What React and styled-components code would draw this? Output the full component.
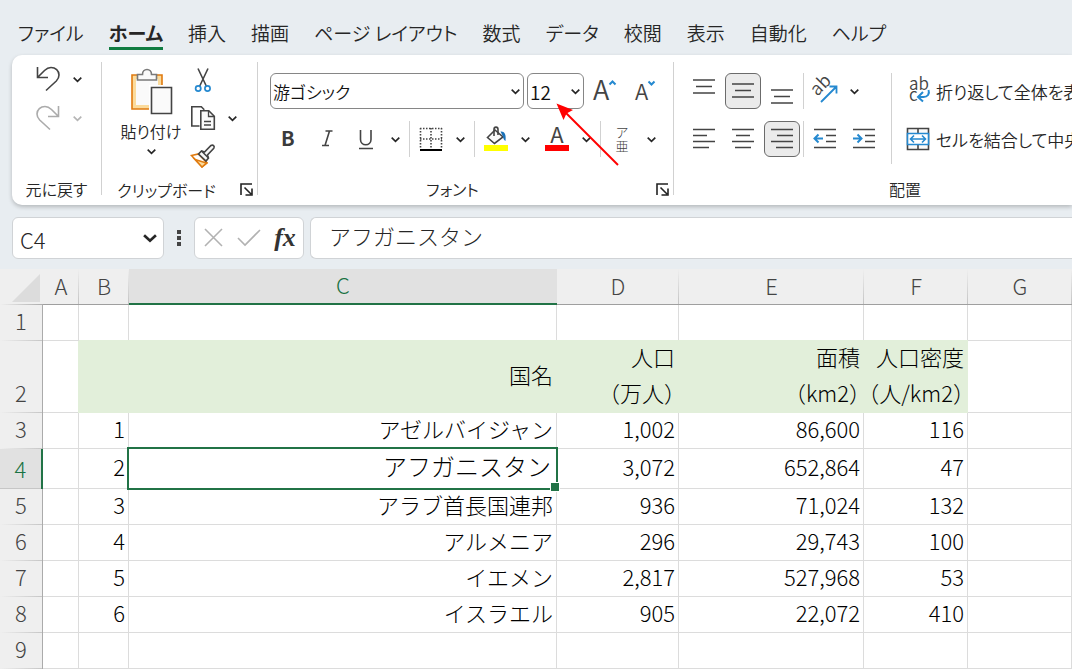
import React from "react";
import styled, { createGlobalStyle } from "styled-components";

const GlobalStyle = createGlobalStyle`
  * {
    box-sizing: border-box;
  }
  body {
    margin: 0;
    background: #e8edf1;
    color: #262626;
    font-family: "Noto Sans CJK JP", sans-serif;
    overflow-x: hidden;
  }
  button, input, select {
    font: inherit;
    color: inherit;
  }
`;

const Page = styled.div`
  position: relative;
  overflow: hidden;
`;

/* tabs */

const Tabs = styled.nav`
  display: flex;
  gap: 25px;
  height: 55px;
  padding: 17px 18px 0;
  white-space: nowrap;
`;

const Tab = styled.a`
  height: 33px;
  font-size: 19px;
  line-height: 32px;
  font-weight: ${(props) => (props.$active ? 700 : 350)};
  font-feature-settings: "palt";
  color: #262626;
  text-decoration: none;
  border-bottom: 3px solid ${(props) => (props.$active ? "#107c41" : "transparent")};
`;

/* ribbon */

const Ribbon = styled.section`
  display: flex;
  height: 150px;
  margin-left: 12px;
  background: #fff;
  border-radius: 10px 0 0 10px;
  box-shadow: 0 2px 4px rgba(0, 0, 0, 0.22);
  font-weight: 350;
  white-space: nowrap;
`;

const Group = styled.div`
  display: flex;
  flex: none;
  flex-direction: column;
  width: ${(props) => props.$width}px;
`;

const GroupBody = styled.div`
  display: flex;
  flex: 1;
  padding: ${(props) => props.$pad || "0"};
`;

const GroupFooter = styled.div`
  display: flex;
  align-items: center;
  height: 32px;
  font-size: 16px;
  line-height: 24px;
  font-feature-settings: "palt";
  text-align: center;
`;

const GroupLabel = styled.span`
  flex: 1;
`;

const Divider = styled.div`
  flex: none;
  width: 1px;
  margin: ${(props) => props.$margin || "0"};
  background: #d1d1d1;
`;

const Rows = styled.div`
  display: flex;
  flex-direction: column;
  gap: 12px;
`;

const Row = styled.div`
  display: flex;
  gap: ${(props) => props.$gap || 3}px;
  height: 36px;
`;

const IconButton = styled.button`
  display: flex;
  flex: none;
  align-items: center;
  justify-content: center;
  width: 36px;
  height: 36px;
  padding: 0;
  border: 1px solid ${(props) => (props.$on ? "#6b6b6b" : "transparent")};
  border-radius: 6px;
  background: ${(props) => (props.$on ? "#ebebeb" : "transparent")};

  svg {
    overflow: visible;
  }
`;

const MenuButton = styled.button`
  display: flex;
  flex: none;
  align-items: center;
  justify-content: center;
  width: 16px;
  padding: 0;
  border: 0;
  background: none;
  color: ${(props) => (props.$muted ? "#b5b5b5" : "#262626")};
`;

const Split = styled.div`
  display: flex;
  gap: 3px;
  padding-right: 3px;
`;

const UndoColumn = styled.div`
  display: flex;
  flex-direction: column;
  gap: 3px;
`;

const ClipColumn = styled.div`
  display: flex;
  flex-direction: column;
  gap: 2px;
`;

const PasteButton = styled.button`
  display: flex;
  flex-direction: column;
  align-items: center;
  width: 68px;
  padding: 5px 0 0;
  border: 0;
  background: none;
  font-size: 16px;
  line-height: 32px;
  font-feature-settings: "palt";
`;

const Picker = styled.div`
  display: grid;
  width: ${(props) => props.$width}px;
  align-items: center;

  select,
  svg {
    grid-area: 1 / 1;
  }
  select {
    height: 36px;
    padding: 0 20px 0 2px;
    appearance: none;
    border: 1px solid #868686;
    border-radius: 6px;
    background: #fff;
    color: #111;
    font-size: ${(props) => props.$size}px;
    font-feature-settings: "palt";
  }
  svg {
    justify-self: end;
    margin-right: 4px;
    pointer-events: none;
  }
`;

const TextButton = styled.button`
  display: flex;
  align-items: center;
  gap: 5px;
  height: 36px;
  padding: 0;
  border: 0;
  background: none;
  font-size: 17px;
  font-feature-settings: "palt";

  svg {
    overflow: visible;
  }
`;

const Launcher = styled.button`
  display: flex;
  justify-content: flex-end;
  width: 26px;
  padding: 0 4px 0 0;
  border: 0;
  background: none;
`;

/* formula bar */

const FormulaBar = styled.div`
  display: flex;
  height: 64px;
  padding: 12px 0 10px 12px;
`;

const Field = styled.div`
  display: flex;
  align-items: center;
  background: #fff;
  border: 1px solid #d0d3d6;
  border-radius: 6px;
`;

const NameBox = styled(Field)`
  width: 152px;
  padding-right: 5px;

  input {
    flex: 1;
    min-width: 0;
    padding: 2px 0 0 7px;
    border: 0;
    background: none;
    outline: none;
    font-size: 22px;
    font-weight: 300;
    line-height: 32px;
  }
`;

const Grip = styled.div`
  display: flex;
  flex-direction: column;
  align-items: center;
  justify-content: center;
  gap: 2px;
  width: 30px;

  i {
    width: 4px;
    height: 4px;
    background: #444;
  }
`;

const EntryButtons = styled(Field)`
  width: 110px;
  justify-content: space-around;
  margin-right: 6px;
`;

const FormulaInput = styled.input`
  && {
    flex: 1;
    min-width: 0;
    padding: 0 0 6px 18px;
    background: #fff;
    border: 1px solid #d0d3d6;
    border-right: 0;
    border-radius: 6px 0 0 6px;
    font-size: 22px;
    font-weight: 300;
  }
`;

const FxButton = styled(IconButton)`
  && {
    color: #333;
    font: italic bold 26px "Liberation Serif", serif;
  }
`;

/* sheet */

const Sheet = styled.table`
  width: 100%;
  table-layout: fixed;
  border-collapse: separate;
  border-spacing: 0;
  background: #fff;
  font-size: 22px;
  font-weight: 300;
  line-height: 30px;
  color: #000;
`;

const Corner = styled.td`
  height: 36px;
  padding: 0 3px 3px 0;
  background: linear-gradient(to right, #efefef, #ababab) bottom / 100% 1px no-repeat #efefef;
  vertical-align: bottom;

  svg {
    display: block;
    margin-left: auto;
  }
`;

const ColHead = styled.th`
  height: 36px;
  padding: 0 0 4px;
  font-weight: 300;
  color: ${(props) => (props.$active ? "#1a7343" : "#444")};
  background: ${(props) =>
    props.$active
      ? "#e1e1e1"
      : "linear-gradient(#efefef, #c4c4c4) right / 1px 100% no-repeat #efefef"};
  border-bottom: ${(props) => (props.$active ? "2px solid #217346" : "1px solid #9f9f9f")};
`;

const RowHead = styled.th`
  padding: 0 0 6px;
  font-weight: 300;
  vertical-align: bottom;
  color: ${(props) => (props.$active ? "#1a7343" : "#444")};
  background: linear-gradient(to right, ${(props) => (props.$active ? "#c6c6c6" : "#efefef")}, #c6c6c6)
    bottom / 100% 1px no-repeat ${(props) => (props.$active ? "#e1e1e1" : "#efefef")};
  border-right: ${(props) => (props.$active ? "2px solid #217346" : "1px solid #ababab")};
`;

const Cell = styled.td`
  height: ${(props) => props.$height}px;
  padding: 0 3px 5px 0;
  text-align: right;
  white-space: pre;
  border-right: 1px solid #dcdcdc;
  border-bottom: 1px solid #dcdcdc;
`;

const HeadingCell = styled(Cell)`
  padding-bottom: 0;
  line-height: 36px;
  font-feature-settings: "halt";
  background: #e2efda;
  border-color: #e2efda;
  box-shadow: 0 -1px 0 #e2efda, -1px 0 0 #e2efda;

  span {
    display: block;
    margin-top: -6px;
  }
`;

const SelectedCell = styled(Cell)`
  position: relative;
  padding-right: 5px;
  font-size: 24px;

  &::before {
    content: "";
    position: absolute;
    inset: -2px;
    border: 2px solid #217346;
  }
  &::after {
    content: "";
    position: absolute;
    right: -4px;
    bottom: -4px;
    width: 8px;
    height: 8px;
    background: #217346;
    border: 1px solid #fff;
  }
`;

const Pointer = styled.svg`
  position: absolute;
  left: 556px;
  top: 103px;
  pointer-events: none;
`;

/* icons */

const Chevron = ({ size = 9 }) => (
  <svg width={size} height={size} viewBox="0 0 9 9" fill="none" stroke="currentColor" strokeWidth="1.7">
    <path d="M.7 2.7l3.8 3.6 3.8-3.6" />
  </svg>
);

const Icon = ({ size = 26, children }) => (
  <svg
    width={size}
    height={size}
    viewBox={`0 0 ${size} ${size}`}
    fill="none"
    stroke="#444"
    strokeWidth="1.6"
    fontFamily="Noto Sans CJK JP, sans-serif"
  >
    {children}
  </svg>
);

const UndoPath = "M2.5 1v10.5H13M3 11l6.5-6.5C11.5 2.600 13.500 1.500 16 1.500c4.500 0 8 3.200 8 7.500 0 2.500-1 4.300-2.700 6L11 24.500";

const UndoIcon = () => (
  <Icon>
    <path d={UndoPath} />
  </Icon>
);

const RedoIcon = () => (
  <Icon>
    <g stroke="#ababab" transform="matrix(-1 0 0 1 26 0)">
      <path d={UndoPath} />
    </g>
  </Icon>
);

const PasteIcon = () => (
  <svg width="44" height="48" viewBox="0 0 44 48" fill="none" strokeWidth="1.6">
    <path d="M3 8h30v34H3z" fill="#fbdb9c" stroke="#e07b10" />
    <path d="M7 12h22v26H7z" fill="#fafafa" />
    <path d="M20 18h14v26H20z" fill="#fff" />
    <path d="M8.500 13V7.500h5C13.500 4.500 15.500 2.500 18 2.500s4.500 2 4.500 5h5V13z" fill="#fafafa" stroke="#7a7a7a" />
    <path d="M22.500 20.500h20v26h-20z" fill="#fafafa" stroke="#444" />
  </svg>
);

const CutIcon = () => (
  <Icon>
    <path d="M8 1.500l8.500 18M18 1.500l-8.500 18" />
    <g stroke="#2589d0" strokeWidth="1.700">
      <circle cx="8.200" cy="21.500" r="2.600" />
      <circle cx="17.500" cy="21.500" r="2.600" />
    </g>
  </Icon>
);

const CopyIcon = () => (
  <Icon>
    <path d="M9.500 21H1.800V1.800h9.500l3 3" />
    <path d="M10.800 5.800h8l5.500 5.500v13H10.800z" fill="#fafafa" />
    <path d="M18.500 6v5.500H24M14 16.500h7M14 20h7" strokeWidth="1.300" />
  </Icon>
);

const BrushIcon = () => (
  <Icon>
    <path d="M1.500 12.500l7-1.500 8.500 9-5 4z" fill="#fff" stroke="#e07b10" />
    <path d="M5 16.500l11.500 3.500-4.500 4z" fill="#fbdb9c" stroke="#e07b10" />
    <path d="M8.500 11l3-3 3 1 6.500-6.500c2-1.300 4 .800 2.800 2.700L17.500 12l1 3-2.500 3z" fill="#fafafa" />
    <path d="M11.500 8l7 7" />
  </Icon>
);

const LaunchIcon = () => (
  <svg width="13" height="13" viewBox="0 0 13 13" fill="none" stroke="#222" strokeWidth="1.600">
    <path d="M1 12V1h11M4.500 4.500l6.500 6.500M12 5.500V12H5.500" />
  </svg>
);

const BordersIcon = () => (
  <Icon>
    <path d="M2 2.500h22M2 13h22M2.500 2v20M13 2v20M23.500 2v20" strokeDasharray="1.500 1.500" />
    <path d="M2 24h22" stroke="#000" strokeWidth="2" />
  </Icon>
);

const FillIcon = () => (
  <Icon>
    <path d="M4.500 11.500L12 4l8 7-8.500 6.500z" fill="#fafafa" />
    <path d="M11 10V3.500c0-3.200 4-3.200 4 0V9" />
    <path d="M17.500 5.500c3.500-.5 6 2 5 9.500-1.500-1-2.300-2.500-2.500-4.500z" fill="#1b72b8" stroke="none" />
    <path d="M1 22h24" stroke="#ff0" strokeWidth="6" />
  </Icon>
);

const FontColorIcon = () => (
  <Icon>
    <text x="13" y="17" textAnchor="middle" fontSize="22" fontWeight="400" fill="#444" stroke="none">A</text>
    <path d="M1 22h24" stroke="red" strokeWidth="6" />
  </Icon>
);

const RubyIcon = () => (
  <Icon>
    <g fill="#444" stroke="none" fontSize="13" textAnchor="middle" fontWeight="300">
      <text x="13" y="11">ア</text>
      <text x="13" y="25">亜</text>
    </g>
  </Icon>
);

const GrowIcon = () => (
  <Icon>
    <text x="1" y="22" fontSize="27" fill="#444" stroke="none">A</text>
    <path d="M17.500 6.500L20.500 3.500l3 3" stroke="#2589d0" strokeWidth="2" />
  </Icon>
);

const ShrinkIcon = () => (
  <Icon>
    <text x="2" y="22" fontSize="22" fill="#444" stroke="none">A</text>
    <path d="M15.500 3.500l3 3 3-3" stroke="#2589d0" strokeWidth="2" />
  </Icon>
);

const LINES = {
  top: "M2 2h22M5 8.500h16M2 15h22",
  middle: "M2 6h22M5 12.500h16M2 19h22",
  bottom: "M2 12h22M5 18.500h16M2 25h22",
  left: "M2 3.500h22M2 9.500h14M2 15.500h22M2 21.500h16",
  center: "M2 3.500h22M6 9.500h14M2 15.500h22M5 21.500h16",
  right: "M2 3.500h22M8 9.500h16M2 15.500h22M7 21.500h17",
};

const LinesIcon = ({ kind }) => (
  <Icon>
    <path d={LINES[kind]} />
  </Icon>
);

const IndentIcon = ({ inward }) => (
  <Icon>
    <path d="M2 3.500h22M14 9.500h10M14 15.500h10M2 21.500h22" />
    <path
      d={inward ? "M2 12.500h8M6.500 8.500l4 4-4 4" : "M11 12.500H3M6.500 8.500l-4 4 4 4"}
      stroke="#2589d0"
      strokeWidth="2"
    />
  </Icon>
);

const OrientationIcon = () => (
  <Icon>
    <text x="5" y="18" fontSize="18" fill="#444" stroke="none" transform="rotate(-45 6 18)">ab</text>
    <path d="M9 24L24 9M17.500 8.500H24.500v7" stroke="#2589d0" strokeWidth="1.800" />
  </Icon>
);

const WrapIcon = () => (
  <Icon>
    <g fill="#444" stroke="none" fontSize="17">
      <text x="4" y="12">ab</text>
      <text x="4" y="23">c</text>
    </g>
    <path d="M23.500 12c1.500 4-1 7-5 7h-5M18 14l-5 5 5 4.500" stroke="#2589d0" strokeWidth="2" />
  </Icon>
);

const MergeIcon = () => (
  <Icon>
    <path d="M2.500 2.500h21v21h-21zM13 2v5M13 19v5" fill="#fafafa" />
    <path d="M2.500 7.500h21v11h-21z" fill="#fff" stroke="#2589d0" />
    <path d="M6 13h14M9 9.500L5.500 13 9 16.500M17 9.500l3.500 3.500-3.500 3.500" stroke="#2589d0" />
  </Icon>
);

const CancelIcon = () => (
  <Icon>
    <path d="M5 4l17 17M22 4L5 21" stroke="#b2b2b2" />
  </Icon>
);

const EnterIcon = () => (
  <Icon>
    <path d="M2 13l7 7L24 5" stroke="#b2b2b2" />
  </Icon>
);

const Menu = ({ label, muted }) => (
  <MenuButton aria-label={label} $muted={muted}>
    <Chevron />
  </MenuButton>
);

const tabs = [
  "ファイル", "ホーム", "挿入", "描画", "ページ レイアウト", "数式",
  "データ", "校閲", "表示", "自動化", "ヘルプ",
];

const columns = [
  { name: "A", width: 36 },
  { name: "B", width: 50 },
  { name: "C", width: 428 },
  { name: "D", width: 122 },
  { name: "E", width: 185 },
  { name: "F", width: 104 },
  { name: "G" },
];

const rows = [
  { cells: [] },
  {
    height: 72,
    filled: true,
    cells: ["", "", "国名", "人口\n（万人）", "面積\n（km2）", "人口密度\n（人/km2）"],
  },
  { cells: ["", "1", "アゼルバイジャン", "1,002", "86,600", "116"] },
  { height: 40, cells: ["", "2", "アフガニスタン", "3,072", "652,864", "47"] },
  { cells: ["", "3", "アラブ首長国連邦", "936", "71,024", "132"] },
  { cells: ["", "4", "アルメニア", "296", "29,743", "100"] },
  { cells: ["", "5", "イエメン", "2,817", "527,968", "53"] },
  { cells: ["", "6", "イスラエル", "905", "22,072", "410"] },
  { cells: [] },
];

const renderCell = (row, rowIndex, col, colIndex) => {
  const height = row.height || 36;
  const text = row.cells[colIndex];
  if (rowIndex === 3 && col.name === "C") {
    return <SelectedCell key={col.name} $height={height}>{text}</SelectedCell>;
  }
  if (row.filled && colIndex > 0 && colIndex < 6) {
    return <HeadingCell key={col.name} $height={height}><span>{text}</span></HeadingCell>;
  }
  return <Cell key={col.name} $height={height}>{text}</Cell>;
};

const App = () => {
  return (
    <Page>
      <GlobalStyle />
      <Tabs>
        {tabs.map((tab) => (
          <Tab key={tab} href="#" $active={tab === "ホーム"}>{tab}</Tab>
        ))}
      </Tabs>

      <Ribbon>
        <Group $width={89}>
          <GroupBody $pad="6px 0 0 18px">
            <UndoColumn>
              <Row>
                <IconButton aria-label="元に戻す"><UndoIcon /></IconButton>
                <Menu label="元に戻すの一覧" />
              </Row>
              <Row>
                <IconButton aria-label="やり直し"><RedoIcon /></IconButton>
                <Menu label="やり直しの一覧" muted />
              </Row>
            </UndoColumn>
          </GroupBody>
          <GroupFooter>
            <GroupLabel>元に戻す</GroupLabel>
          </GroupFooter>
        </Group>
        <Divider $margin="7px 0 10px" />

        <Group $width={155}>
          <GroupBody $pad="7px 0 0 15px">
            <PasteButton>
              <PasteIcon />
              貼り付け
              <Chevron />
            </PasteButton>
            <ClipColumn>
              <Row>
                <IconButton aria-label="切り取り"><CutIcon /></IconButton>
              </Row>
              <Row>
                <IconButton aria-label="コピー"><CopyIcon /></IconButton>
                <Menu label="コピーの一覧" />
              </Row>
              <Row>
                <IconButton aria-label="書式のコピー"><BrushIcon /></IconButton>
              </Row>
            </ClipColumn>
          </GroupBody>
          <GroupFooter>
            <GroupLabel>クリップボード</GroupLabel>
            <Launcher aria-label="クリップボードの詳細"><LaunchIcon /></Launcher>
          </GroupFooter>
        </Group>
        <Divider $margin="7px 0 10px" />

        <Group $width={415}>
          <GroupBody $pad="18px 0 0 12px">
            <Rows>
              <Row>
                <Picker $width={254} $size={17}>
                  <select aria-label="フォント名">
                    <option>游ゴシック</option>
                  </select>
                  <Chevron />
                </Picker>
                <Picker $width={57} $size={19}>
                  <select aria-label="フォント サイズ">
                    <option>12</option>
                  </select>
                  <Chevron />
                </Picker>
                <Row $gap={5}>
                  <IconButton aria-label="フォント サイズの拡大"><GrowIcon /></IconButton>
                  <IconButton aria-label="フォント サイズの縮小"><ShrinkIcon /></IconButton>
                </Row>
              </Row>
              <Row>
                <IconButton aria-label="太字">
                  <Icon><text x="6" y="20" fontSize="20" fontWeight="700" fill="#3b3b3b" stroke="none">B</text></Icon>
                </IconButton>
                <IconButton aria-label="斜体">
                  <Icon>
                    <path d="M11.500 5h7M8 19.500h7M15.500 5l-4.500 14.500" />
                  </Icon>
                </IconButton>
                <Split>
                  <IconButton aria-label="下線">
                    <Icon>
                      <path d="M7.500 4v9.500c0 7 10.500 7 10.500 0V4M6 22.500h14" />
                    </Icon>
                  </IconButton>
                  <Menu label="下線の種類" />
                </Split>
                <Divider />
                <Split>
                  <IconButton aria-label="罫線"><BordersIcon /></IconButton>
                  <Menu label="罫線の種類" />
                </Split>
                <Divider />
                <Split>
                  <IconButton aria-label="塗りつぶしの色"><FillIcon /></IconButton>
                  <Menu label="塗りつぶしの色の一覧" />
                </Split>
                <Split>
                  <IconButton aria-label="フォントの色"><FontColorIcon /></IconButton>
                  <Menu label="フォントの色の一覧" />
                </Split>
                <Divider />
                <Split>
                  <IconButton aria-label="ふりがなの表示"><RubyIcon /></IconButton>
                  <Menu label="ふりがなの設定" />
                </Split>
              </Row>
            </Rows>
          </GroupBody>
          <GroupFooter>
            <GroupLabel>フォント</GroupLabel>
            <Launcher aria-label="フォントの設定"><LaunchIcon /></Launcher>
          </GroupFooter>
        </Group>
        <Divider $margin="7px 0 10px" />

        <Group $width={462}>
          <GroupBody $pad="18px 0 0 12px">
            <Rows>
              <Row>
                <IconButton aria-label="上揃え"><LinesIcon kind="top" /></IconButton>
                <IconButton aria-label="上下中央揃え" $on><LinesIcon kind="middle" /></IconButton>
                <IconButton aria-label="下揃え"><LinesIcon kind="bottom" /></IconButton>
                <Divider />
                <IconButton aria-label="方向"><OrientationIcon /></IconButton>
                <Menu label="方向の一覧" />
              </Row>
              <Row>
                <IconButton aria-label="左揃え"><LinesIcon kind="left" /></IconButton>
                <IconButton aria-label="中央揃え"><LinesIcon kind="center" /></IconButton>
                <IconButton aria-label="右揃え" $on><LinesIcon kind="right" /></IconButton>
                <Divider />
                <IconButton aria-label="インデントを減らす"><IndentIcon /></IconButton>
                <IconButton aria-label="インデントを増やす"><IndentIcon inward /></IconButton>
              </Row>
            </Rows>
            <Divider $margin="0 13px 9px 9px" />
            <Rows>
              <TextButton><WrapIcon />折り返して全体を表示する</TextButton>
              <TextButton><MergeIcon />セルを結合して中央揃え</TextButton>
            </Rows>
          </GroupBody>
          <GroupFooter>
            <GroupLabel>配置</GroupLabel>
          </GroupFooter>
        </Group>
      </Ribbon>

      <FormulaBar>
        <NameBox>
          <input aria-label="名前ボックス" defaultValue="C4" />
          <MenuButton aria-label="名前の一覧"><Chevron size={14} /></MenuButton>
        </NameBox>
        <Grip><i /><i /><i /></Grip>
        <EntryButtons>
          <IconButton aria-label="キャンセル"><CancelIcon /></IconButton>
          <IconButton aria-label="入力"><EnterIcon /></IconButton>
          <FxButton aria-label="関数の挿入">fx</FxButton>
        </EntryButtons>
        <FormulaInput aria-label="数式バー" defaultValue="アフガニスタン" />
      </FormulaBar>

      <Sheet>
        <colgroup>
          <col width="43" />
          {columns.map((col) => (
            <col key={col.name} width={col.width} />
          ))}
        </colgroup>
        <thead>
          <tr>
            <Corner>
              <svg width="28" height="28" viewBox="0 0 28 28">
                <path d="M28 0v28H0z" fill="#dcdcdc" />
              </svg>
            </Corner>
            {columns.map((col) => (
              <ColHead key={col.name} scope="col" $active={col.name === "C"}>{col.name}</ColHead>
            ))}
          </tr>
        </thead>
        <tbody>
          {rows.map((row, i) => (
            <tr key={i}>
              <RowHead scope="row" $active={i === 3}>{i + 1}</RowHead>
              {columns.map((col, j) => renderCell(row, i, col, j))}
            </tr>
          ))}
        </tbody>
      </Sheet>

      <Pointer width="64" height="64" viewBox="0 0 64 64">
        <path d="M9 9l53 53" stroke="red" strokeWidth="2" />
        <path d="M.5.500L17 7l-6.500 3.500L7.500 17z" fill="red" />
      </Pointer>
    </Page>
  );
};

export default App;
